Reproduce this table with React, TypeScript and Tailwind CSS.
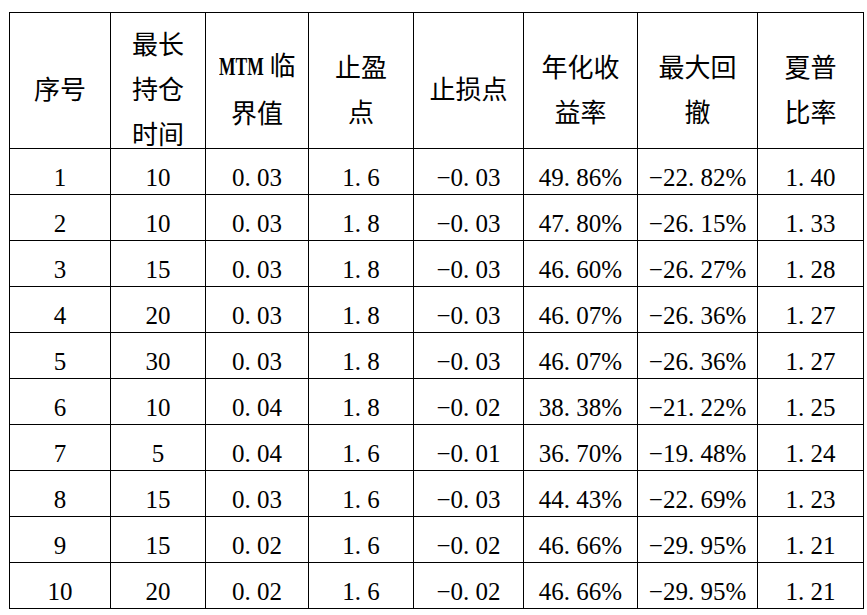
import React from "react";

// header lines, wrapped as in the picture
const headers: React.ReactNode[][] = [
  ["序号"],
  ["最长", "持仓", "时间"],
  [
    <span key="mtm" className="whitespace-nowrap">
      <span className="inline-block w-[45px] text-left align-baseline">
        <span className="inline-block origin-left scale-x-[0.7] font-bold text-[25px] font-['Liberation_Serif',serif]">
          MTM
        </span>
      </span>{" "}
      临
    </span>,
    "界值",
  ],
  ["止盈", "点"],
  ["止损点"],
  ["年化收", "益率"],
  ["最大回", "撤"],
  ["夏普", "比率"],
];

const colWidths = ["w-[101px]", "w-[95px]", "w-[103px]", "w-[105px]", "w-[110px]", "w-[114px]", "w-[120px]", "w-[106px]"];

const rows: string[][] = [
  ["1", "10", "0.03", "1.6", "-0.03", "49.86%", "-22.82%", "1.40"],
  ["2", "10", "0.03", "1.8", "-0.03", "47.80%", "-26.15%", "1.33"],
  ["3", "15", "0.03", "1.8", "-0.03", "46.60%", "-26.27%", "1.28"],
  ["4", "20", "0.03", "1.8", "-0.03", "46.07%", "-26.36%", "1.27"],
  ["5", "30", "0.03", "1.8", "-0.03", "46.07%", "-26.36%", "1.27"],
  ["6", "10", "0.04", "1.8", "-0.02", "38.38%", "-21.22%", "1.25"],
  ["7", "5", "0.04", "1.6", "-0.01", "36.70%", "-19.48%", "1.24"],
  ["8", "15", "0.03", "1.6", "-0.03", "44.43%", "-22.69%", "1.23"],
  ["9", "15", "0.02", "1.6", "-0.02", "46.66%", "-29.95%", "1.21"],
  ["10", "20", "0.02", "1.6", "-0.02", "46.66%", "-29.95%", "1.21"],
];

// SimSun-like look: the dot sits in a half-em cell, minus is a long dash
function Num({ value }: { value: string }) {
  const text = value.replace("-", "−");
  const [a, b] = text.split(".");
  if (b === undefined) return <>{text}</>;
  return (
    <>
      {a}
      <span className="inline-block w-[0.5em] text-left">.</span>
      {b}
    </>
  );
}

export default function App() {
  return (
    <div className="w-[867px] h-[615px] bg-white pt-[12px] pl-[9px] text-black">
      <table className="border-collapse table-fixed w-[854px]">
        <colgroup>
          {colWidths.map((w, i) => (
            <col key={i} className={w} />
          ))}
        </colgroup>
        <thead>
          <tr>
            {headers.map((lines, i) => (
              <th key={i} className="border border-black p-0 font-normal">
                <div className="h-[135px] pt-[14px] flex flex-col justify-center items-center leading-[45px] text-[26px] font-['Noto_Sans_CJK_SC',sans-serif]">
                  {lines.map((l, j) => (
                    <div key={j} className="whitespace-nowrap">
                      {l}
                    </div>
                  ))}
                </div>
              </th>
            ))}
          </tr>
        </thead>
        <tbody>
          {rows.map((r, i) => (
            <tr key={i}>
              {r.map((c, j) => (
                <td key={j} className="border border-black p-0">
                  <div className="h-[45px] pt-[12px] flex items-center justify-center whitespace-nowrap text-[25px] font-['Liberation_Serif','Noto_Sans_CJK_SC',serif]">
                    <Num value={c} />
                  </div>
                </td>
              ))}
            </tr>
          ))}
        </tbody>
      </table>
    </div>
  );
}
